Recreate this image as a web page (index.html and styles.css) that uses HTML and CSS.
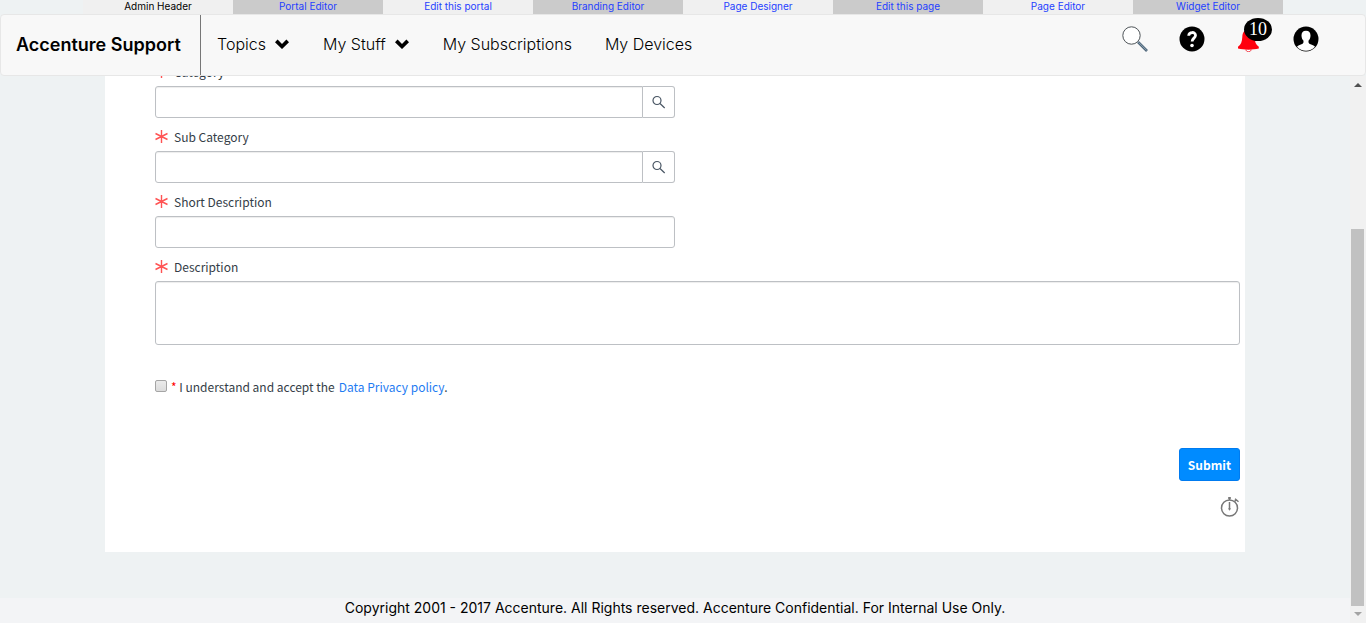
FILE: index.html
```html
<!DOCTYPE html>
<html lang="en">
<head>
<meta charset="utf-8">
<title>Accenture Support</title>
<link rel="stylesheet" href="styles.css">
</head>
<body>
<nav class="admin" aria-label="Admin">
  <span class="admin-item admin-title">Admin Header</span>
  <a class="admin-item" href="#">Portal Editor</a>
  <a class="admin-item" href="#">Edit this portal</a>
  <a class="admin-item" href="#">Branding Editor</a>
  <a class="admin-item" href="#">Page Designer</a>
  <a class="admin-item" href="#">Edit this page</a>
  <a class="admin-item" href="#">Page Editor</a>
  <a class="admin-item" href="#">Widget Editor</a>
</nav>
<header class="navbar">
  <a class="brand" href="#">Accenture Support</a>
  <nav class="menu" aria-label="Main">
    <a class="menu-link" href="#">Topics <svg class="chevron" viewBox="0 0 16 12"><path d="M1 4.2 3.600 1.600 8 6l4.400-4.400L15 4.200 8 11z"/></svg></a>
    <a class="menu-link" href="#">My Stuff <svg class="chevron" viewBox="0 0 16 12"><path d="M1 4.2 3.600 1.600 8 6l4.400-4.400L15 4.200 8 11z"/></svg></a>
    <a class="menu-link" href="#">My Subscriptions</a>
    <a class="menu-link" href="#">My Devices</a>
  </nav>
  <div class="tools">
    <button class="tool" aria-label="Search"><svg viewBox="0 0 26 26"><circle cx="9.500" cy="9.500" r="8.700" fill="#fff" stroke="#4d5357"/><path d="m16 16 9 9" stroke="#4d6478" stroke-width="2.600"/><path d="m16.500 16.300 8.200 8.200" stroke="#9fb6c4" stroke-width=".8"/></svg></button>
    <button class="tool" aria-label="Help"><svg viewBox="0 0 26 26"><circle cx="13" cy="13" r="12.500"/><path d="M9.700 9.700c.2-4.200 7-4.200 6.800-.2-.1 2.500-3.400 2.900-3.400 6" fill="none" stroke="#fff" stroke-width="2.800"/><circle cx="13" cy="19.500" r="1.800" fill="#fff"/></svg></button>
    <button class="tool" aria-label="Notifications"><svg viewBox="0 0 26 26"><path d="M10 23.500c0 3 5 3 5 0" fill="#fff" stroke="#f01020" stroke-width=".9"/><path d="M2 20.800c3-2 4-5 4.300-9.800C6.600 5.500 9 3.500 12.500 3.500s5.700 2 6 7.500c.3 4.800 1.300 7.800 4.300 9.800v1.700c-6 1.500-14.800 1.500-20.800 0z" fill="#ff000e"/></svg><span class="count">10</span></button>
    <button class="tool" aria-label="Profile"><svg viewBox="0 0 26 26"><circle cx="13" cy="13" r="12.500"/><path d="M13 4.700c3.200 0 4.600 2.200 4.500 5-.1 2.400-.9 3.800-1.900 4.900-.4 2.600.3 3.100 2.500 3.800 1.800.6 3.100 1.200 3.900 2.400a12 12 0 0 1-18 0c.8-1.200 2.100-1.800 3.900-2.400 2.200-.7 2.900-1.200 2.500-3.800-1-1.100-1.800-2.500-1.900-4.900-.1-2.800 1.300-5 4.500-5z" fill="#fff"/></svg></button>
  </div>
</header>
<div class="viewport">
  <div class="page">
    <main class="content">
      <form class="card">
        <div class="field">
          <label class="label" for="category"><svg class="required" viewBox="0 0 13 13"><path d="M6.500 0v13M.5 3.500l12 6M12.500 3.500l-12 6"/></svg>Category</label>
          <div class="lookup"><input class="input" id="category" type="text"><button class="lookup-button" type="button" aria-label="Look up category"><svg viewBox="0 0 14 14"><circle cx="5" cy="5.500" r="4"/><path d="m8 8.500 4.700 4.500"/></svg></button></div>
        </div>
        <div class="field">
          <label class="label" for="subcategory"><svg class="required" viewBox="0 0 13 13"><path d="M6.500 0v13M.5 3.500l12 6M12.500 3.500l-12 6"/></svg>Sub Category</label>
          <div class="lookup"><input class="input" id="subcategory" type="text"><button class="lookup-button" type="button" aria-label="Look up sub category"><svg viewBox="0 0 14 14"><circle cx="5" cy="5.500" r="4"/><path d="m8 8.500 4.700 4.500"/></svg></button></div>
        </div>
        <div class="field">
          <label class="label" for="short"><svg class="required" viewBox="0 0 13 13"><path d="M6.500 0v13M.5 3.500l12 6M12.500 3.500l-12 6"/></svg>Short Description</label>
          <input class="input" id="short" type="text">
        </div>
        <div class="field field-wide">
          <label class="label" for="description"><svg class="required" viewBox="0 0 13 13"><path d="M6.500 0v13M.5 3.500l12 6M12.500 3.500l-12 6"/></svg>Description</label>
          <textarea class="input textarea" id="description"></textarea>
        </div>
        <div class="consent">
          <input class="checkbox" id="consent" type="checkbox">
          <label for="consent"><span class="star">*</span> I understand and accept the</label>
          <span class="policy"><a class="policy-link" href="#">Data Privacy policy</a>.</span>
        </div>
        <div class="actions">
          <button class="submit" type="submit">Submit</button>
          <svg class="timer" viewBox="0 0 20 20"><circle cx="9.500" cy="11" r="8"/><path d="M9.500 3V0M8 1h3M9.500 5v8M14.500 4.500l2-2M15 1.800l3.500 3"/><path d="M8.300 11h2.400l-1.200 3z" fill="#777" stroke="none"/></svg>
        </div>
      </form>
    </main>
    <footer class="footer">Copyright 2001 - 2017 Accenture. All Rights reserved. Accenture Confidential. For Internal Use Only.</footer>
  </div>
  <div class="scrollbar" aria-hidden="true">
    <svg class="arrow" viewBox="0 0 16 17"><path d="M4 11h8L8 7z" fill="#505050"/></svg>
    <div class="track"><div class="thumb"></div></div>
    <svg class="arrow" viewBox="0 0 16 17"><path d="M4 6h8l-4 4z" fill="#a3a3a3"/></svg>
  </div>
</div>
</body>
</html>
```
FILE: styles.css
```css
* { box-sizing: border-box; }

body {
  display: flex;
  flex-direction: column;
  height: 100vh;
  margin: 0;
  overflow: hidden;
  background: #eef2f3;
  color: #000;
  font-family: Inter, "Liberation Sans", sans-serif;
}

a { color: inherit; text-decoration: none; }
button { border: 0; padding: 0; background: none; cursor: pointer; }
svg { display: block; }

.admin {
  display: grid;
  grid-template-columns: repeat(8, 150px);
  justify-content: center;
  flex: none;
  font-size: 10px;
  line-height: 12px;
  text-align: center;
}
.admin-item { padding-bottom: 2px; background: #cbcbcb; color: #1f3fff; }
.admin-item:nth-child(odd) { background: #f0f0f0; }
.admin-item.admin-title { color: #000; }

.navbar {
  display: flex;
  flex: none;
  height: 62px;
  border: 1px solid #e7e7e7;
  border-radius: 4px;
  background: #f8f8f8;
}
.brand {
  display: flex;
  align-items: center;
  width: 200px;
  padding: 0 0 2px 15px;
  border-right: 1px solid #777;
  font-size: 18px;
  font-weight: 600;
  white-space: nowrap;
}
.menu { display: flex; align-items: center; gap: 33px; padding: 0 0 2px 16px; }
.menu-link { display: flex; align-items: center; gap: 8px; font-size: 16px; font-weight: 300; white-space: nowrap; }
.chevron { width: 16px; height: 12px; }
.tools {
  display: flex;
  align-items: flex-start;
  gap: 31px;
  margin-left: auto;
  padding: 11px 46px 0 0;
}
.tool { position: relative; width: 26px; height: 26px; }
.tool svg { width: 26px; height: 26px; }
.count {
  position: absolute;
  top: -8px;
  left: 8px;
  width: 28px;
  border-radius: 50%;
  background: #000;
  color: #fff;
  font: 18px/23px "Liberation Serif", serif;
  text-align: center;
}

.viewport { display: flex; flex: 1; min-height: 0; }
.page {
  display: flex;
  flex: 1;
  flex-direction: column;
  justify-content: flex-end;
  overflow: hidden;
}
.content { flex: none; width: 100%; max-width: 1140px; margin: 0 auto 46px; }
.card {
  padding: 20px 5px 35px 50px;
  background: #fff;
  color: #343d47;
  font-family: "Noto Sans CJK SC", sans-serif;
  font-size: 12px;
}
.field { max-width: 520px; }
.field-wide { max-width: none; }
.label { display: flex; align-items: center; gap: 6px; height: 33px; padding-top: 4px; }
.required { width: 13px; height: 13px; fill: none; stroke: #ff5353; stroke-width: 1.4; }
.input {
  display: block;
  width: 100%;
  height: 32px;
  border: 1px solid #bdc0c4;
  border-radius: 3px;
  padding: 4px 8px;
  background: #fff;
  box-shadow: inset 0 1px 1px #00000013;
  font: inherit;
}
.textarea { height: 64px; resize: none; }
.lookup { display: flex; }
.lookup .input { flex: 1; width: auto; border-radius: 3px 0 0 3px; }
.lookup-button {
  display: grid;
  place-items: center;
  width: 32px;
  border: 1px solid #bdc0c4;
  border-left: 0;
  border-radius: 0 3px 3px 0;
}
.lookup-button svg { width: 14px; height: 14px; fill: none; stroke: #485563; stroke-width: 1.2; }
.consent { display: flex; align-items: center; height: 20px; margin-top: 31px; }
.checkbox {
  appearance: none;
  width: 12px;
  height: 12px;
  margin: 0 4px 0 0;
  border: 1px solid #a5a5a5;
  border-radius: 2px;
  background: linear-gradient(#ebebeb, #dcdcdc);
}
.star { color: #f00; }
.policy { margin-left: 4px; }
.policy-link { color: #1f7cf2; }
.actions { display: flex; flex-direction: column; align-items: flex-end; gap: 16px; margin-top: 52px; }
.submit {
  height: 33px;
  padding: 0 8px;
  border: 1px solid #007bf0;
  border-radius: 3px;
  background: #008bff;
  color: #fff;
  font: bold 12px "Noto Sans CJK SC", sans-serif;
}
.timer { width: 20px; height: 20px; fill: none; stroke: #777; stroke-width: 1.5; }
.footer {
  flex: none;
  height: 25px;
  background: #f3f4f6;
  font-size: 14px;
  line-height: 19px;
  text-align: center;
}

.scrollbar { display: flex; flex: none; flex-direction: column; width: 16px; background: #f1f1f1; }
.arrow { width: 16px; height: 17px; }
.track { display: flex; flex: 1; flex-direction: column; justify-content: flex-end; padding: 0 2px 0 1px; }
.thumb { height: 73.5%; background: #c1c1c1; }
```
